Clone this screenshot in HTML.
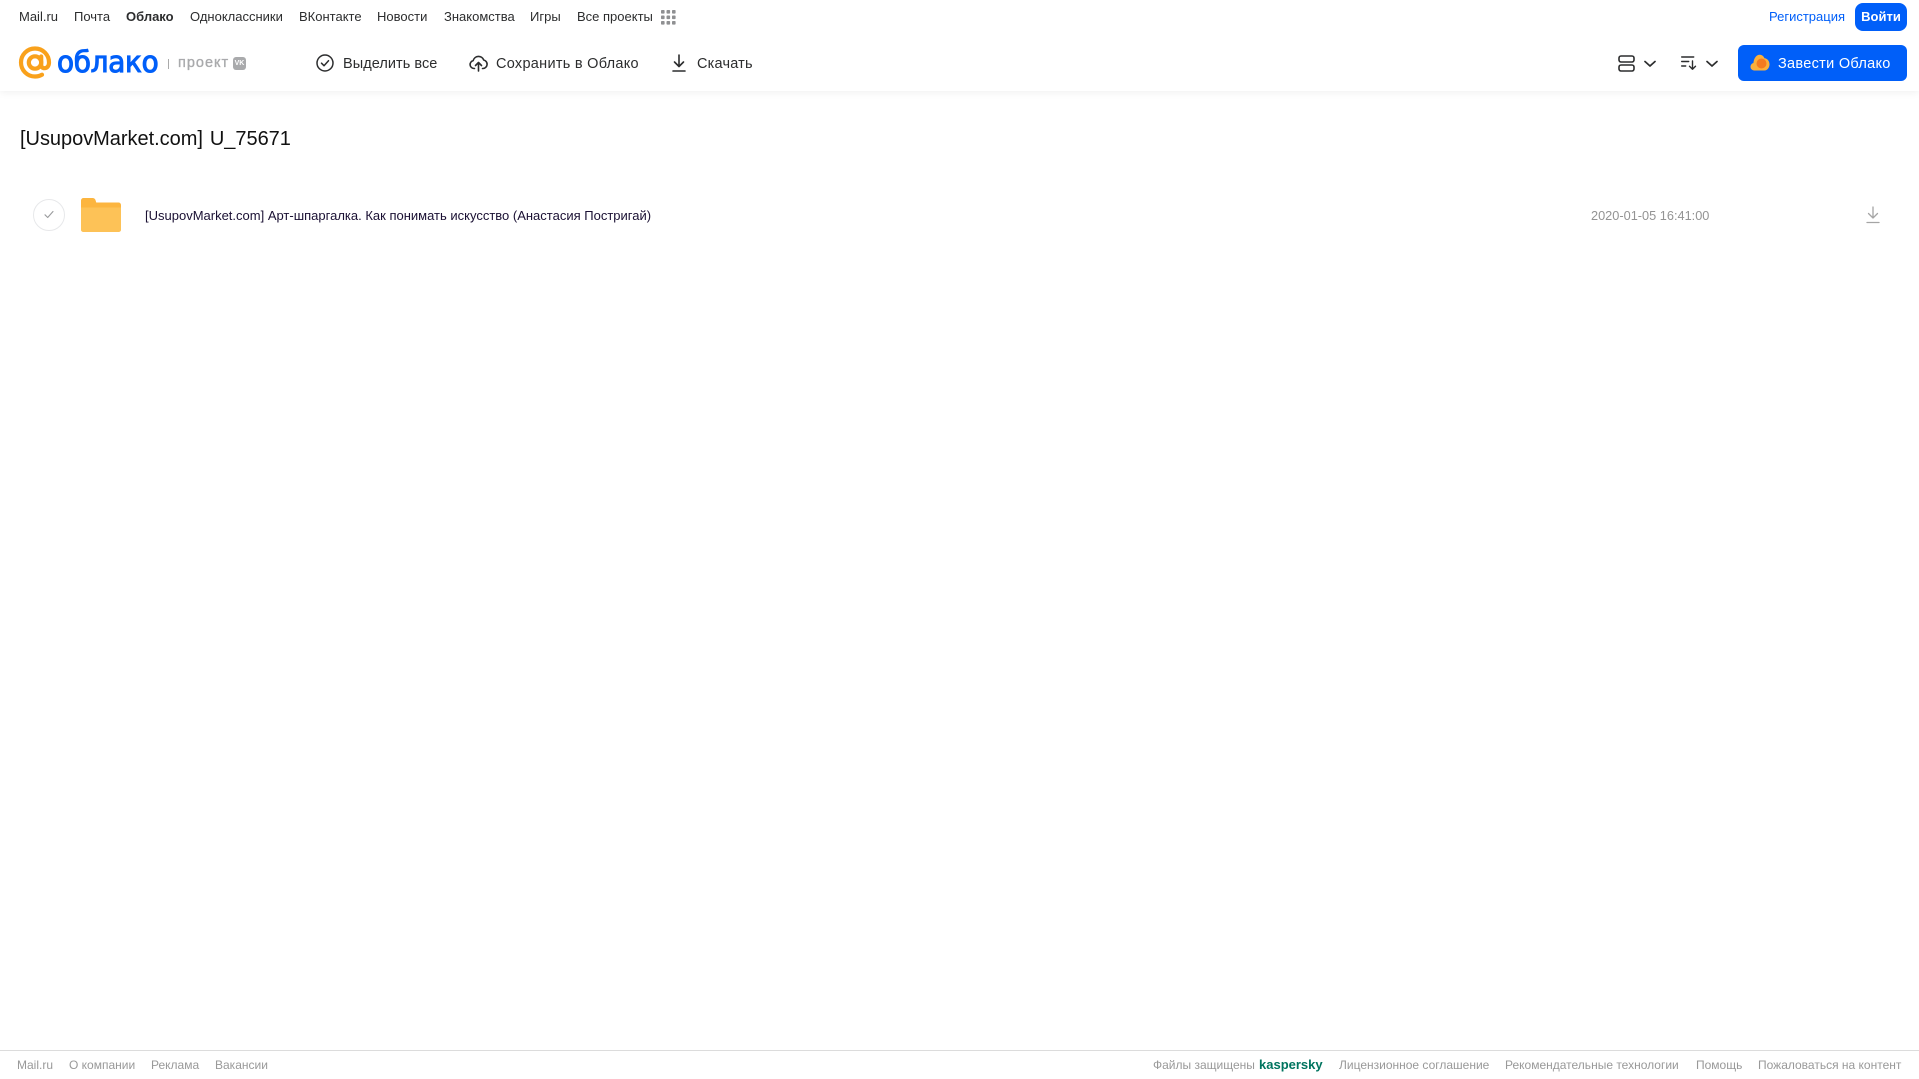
<!DOCTYPE html>
<html lang="ru"><head><meta charset="utf-8"><title>Облако</title>
<style>
html,body{margin:0;padding:0;background:#fff}
body{width:1919px;height:1079px;position:relative;overflow:hidden;font-family:"Liberation Sans","DejaVu Sans",sans-serif}
.t{position:absolute;white-space:nowrap;line-height:20px;height:20px}
.n{top:7px;font-size:13px;color:#2c2d2e;transform-origin:0 50%}
.a{top:53.5px;font-size:14.5px;color:#2c2d2e}
.f{top:1055px;font-size:12px;color:#999}
svg{position:absolute;overflow:visible}
</style></head><body>
<div style="position:absolute;left:0;top:0;width:1919px;height:91px;background:#fff;box-shadow:0 1px 8px rgba(0,0,0,.07)"></div>

<span class="t n" style="left:19px">Mail.ru</span>
<span class="t n" style="left:74px">Почта</span>
<span class="t n" style="left:126px;font-weight:bold">Облако</span>
<span class="t n" style="left:190px">Одноклассники</span>
<span class="t n" style="left:299px">ВКонтакте</span>
<span class="t n" style="left:377px">Новости</span>
<span class="t n" style="left:444px">Знакомства</span>
<span class="t n" style="left:530px">Игры</span>
<span class="t n" style="left:577px">Все проекты</span>
<svg style="left:661px;top:10px" width="15" height="15" fill="#8f9092"><rect x="0" y="0" width="3.6" height="3.6" rx=".8"/><rect x="5.5" y="0" width="3.6" height="3.6" rx=".8"/><rect x="11" y="0" width="3.6" height="3.6" rx=".8"/><rect x="0" y="5.5" width="3.6" height="3.6" rx=".8"/><rect x="5.5" y="5.5" width="3.6" height="3.6" rx=".8"/><rect x="11" y="5.5" width="3.6" height="3.6" rx=".8"/><rect x="0" y="11" width="3.6" height="3.6" rx=".8"/><rect x="5.5" y="11" width="3.6" height="3.6" rx=".8"/><rect x="11" y="11" width="3.6" height="3.6" rx=".8"/></svg>

<span class="t" style="left:1769px;top:7px;font-size:13px;color:#005ff9">Регистрация</span>
<div style="position:absolute;left:1855px;top:3px;width:52px;height:28px;border-radius:8px;background:#005ff9;color:#fff;font-size:13px;font-weight:bold;line-height:28px;text-align:center">Войти</div>

<!-- logo -->
<svg style="left:18px;top:46px" width="34" height="34" viewBox="0 0 34 34" fill="none" stroke="#f9a11b" stroke-width="4.2"><circle cx="17" cy="16.5" r="6.2"/><path d="M23.2 10.500v8.200c0 2.200 1.400 3.500 3.200 3.500 2.400 0 4.600-2 4.600-5.700C31 8.700 24.800 2.500 17 2.500S3 8.700 3 16.500s6.200 14 14 14c2.800 0 5-.6 7-1.800" stroke-linecap="round"/></svg>
<span class="t" style="left:57px;top:49px;height:26px;line-height:26px;font-size:29.5px;color:#005ff9;font-family:'DejaVu Sans',sans-serif;transform:scaleX(.945);transform-origin:0 50%;-webkit-text-stroke:1.1px #005ff9;letter-spacing:-.3px">облако</span>
<div style="position:absolute;left:168px;top:59px;width:1px;height:10px;background:#aaa"></div>
<span class="t" style="left:178px;top:53px;font-size:14.5px;color:#a9aaac;letter-spacing:1px;-webkit-text-stroke:.35px #a9aaac">проект</span>
<div style="position:absolute;left:233px;top:57px;width:13px;height:13px;border-radius:3px;background:#a9aaac;color:#fff;font-size:7px;font-weight:bold;line-height:13px;text-align:center">VK</div>

<!-- toolbar -->
<svg style="left:316px;top:54px" width="18" height="18" viewBox="0 0 18 18" fill="none" stroke="#2c2d2e" stroke-width="1.5"><circle cx="9" cy="9" r="8"/><path d="M5.5 9.200l2.500 2.500 4.500-5" stroke-linecap="round" stroke-linejoin="round"/></svg>
<span class="t a" style="left:343px;letter-spacing:.05px">Выделить все</span>
<svg style="left:469px;top:54px" width="19" height="18" viewBox="0 0 19 18" fill="none" stroke="#2c2d2e" stroke-width="1.6" stroke-linecap="round" stroke-linejoin="round"><path d="M5.500 14.500H5a4 4 0 0 1-.8-7.900A5.500 5.500 0 0 1 14.700 6a4.300 4.300 0 0 1-.7 8.500h-.5"/><path d="M9.500 17V8.500M6.500 11.500l3-3 3 3"/></svg>
<span class="t a" style="left:496px;letter-spacing:.28px">Сохранить в Облако</span>
<svg style="left:671px;top:54px" width="16" height="18" viewBox="0 0 16 18" fill="none" stroke="#2c2d2e" stroke-width="1.6" stroke-linecap="round" stroke-linejoin="round"><path d="M8 1v11M3.500 8l4.500 4.500L12.500 8M2 17h12"/></svg>
<span class="t a" style="left:697px;letter-spacing:.2px">Скачать</span>

<svg style="left:1618px;top:55px" width="17" height="17" viewBox="0 0 17 17" fill="none" stroke="#2c2d2e" stroke-width="1.6"><rect x="1" y="1" width="15" height="6" rx="2"/><rect x="1" y="10" width="15" height="6" rx="2"/></svg>
<svg style="left:1644px;top:60px" width="12" height="8" viewBox="0 0 12 8" fill="none" stroke="#2c2d2e" stroke-width="1.7" stroke-linecap="round" stroke-linejoin="round"><path d="M1 1.500l5 4.500 5-4.500"/></svg>
<svg style="left:1681px;top:56px" width="16" height="14" viewBox="0 0 16 14" fill="none" stroke="#2c2d2e" stroke-width="1.4" stroke-linecap="round" stroke-linejoin="round"><path d="M.7 1h12M.7 5.500h7M.7 10h4M11.500 5v8M8.500 10.300l3 3 3-3"/></svg>
<svg style="left:1706px;top:60px" width="12" height="8" viewBox="0 0 12 8" fill="none" stroke="#2c2d2e" stroke-width="1.7" stroke-linecap="round" stroke-linejoin="round"><path d="M1 1.500l5 4.500 5-4.500"/></svg>

<div style="position:absolute;left:1738px;top:45px;width:169px;height:36px;border-radius:6px;background:#005ff9"></div>
<svg style="left:1750px;top:54px" width="20" height="17" viewBox="0 0 20 17"><path fill="#fbb03b" d="M4 16.500a3.800 3.800 0 0 1-.6-7.500C4 4 6.500.8 9.500.8c2.300 0 4 1.300 5 3.500 2.800.2 5 2.800 5 6 0 3.400-2.200 6.200-5 6.200z"/><circle cx="11.500" cy="9.500" r="5" fill="#f47b20"/></svg>
<span class="t" style="left:1778px;top:53.5px;font-size:14.5px;color:#fff;letter-spacing:.3px">Завести Облако</span>

<!-- content -->
<span class="t" style="left:20px;top:127px;height:24px;line-height:24px;font-size:20px;color:#111;word-spacing:1.5px;letter-spacing:-.03px">[UsupovMarket.com] U_75671</span>

<div style="position:absolute;left:33px;top:199px;width:30px;height:30px;border:1px solid #e7e8ea;border-radius:50%"></div>
<svg style="left:44px;top:210px" width="10" height="9" viewBox="0 0 10 9" fill="none" stroke="#9a9b9d" stroke-width="1.1" stroke-linecap="round" stroke-linejoin="round"><path d="M1 4.800l2.700 2.700L9 1.500"/></svg>

<svg style="left:81px;top:198px" width="40" height="34" viewBox="0 0 41 34" preserveAspectRatio="none"><path fill="#fcb53f" d="M2.500 0h9c2 0 3 .7 3.500 2.500l.6 2H38.500A2.500 2.500 0 0 1 41 7v24.500a2.500 2.500 0 0 1-2.500 2.500h-36A2.500 2.500 0 0 1 0 31.500v-29A2.500 2.500 0 0 1 2.500 0z"/><path fill="#fdc257" d="M0 9.500V31.500A2.500 2.500 0 0 0 2.500 34h36a2.500 2.500 0 0 0 2.500-2.500V9.500z"/></svg>

<span class="t" style="left:145px;top:206px;font-size:13px;color:#1a1033">[UsupovMarket.com] Арт-шпаргалка. Как понимать искусство (Анастасия Постригай)</span>
<span class="t" style="left:1591px;top:206px;font-size:12.75px;color:#939393">2020-01-05 16:41:00</span>
<svg style="left:1866px;top:206px" width="14" height="18" viewBox="0 0 14 18" fill="none" stroke="#a5a5a5" stroke-width="1.3" stroke-linecap="round" stroke-linejoin="round"><path d="M7 1v11M2.500 7.500L7 12l4.500-4.500M1 16.500h12"/></svg>

<!-- footer -->
<div style="position:absolute;left:0;top:1050px;width:1919px;height:1px;background:#dcdcdc"></div>
<span class="t f" style="left:17px">Mail.ru</span>
<span class="t f" style="left:69px">О компании</span>
<span class="t f" style="left:151px">Реклама</span>
<span class="t f" style="left:215px">Вакансии</span>
<span class="t f" style="left:1153px">Файлы защищены</span>
<span class="t f" style="left:1259px;font-size:13px;font-weight:bold;color:#00745f">kaspersky</span>
<span class="t f" style="left:1339px">Лицензионное соглашение</span>
<span class="t f" style="left:1505px">Рекомендательные технологии</span>
<span class="t f" style="left:1696px">Помощь</span>
<span class="t f" style="left:1758px">Пожаловаться на контент</span>
</body></html>
